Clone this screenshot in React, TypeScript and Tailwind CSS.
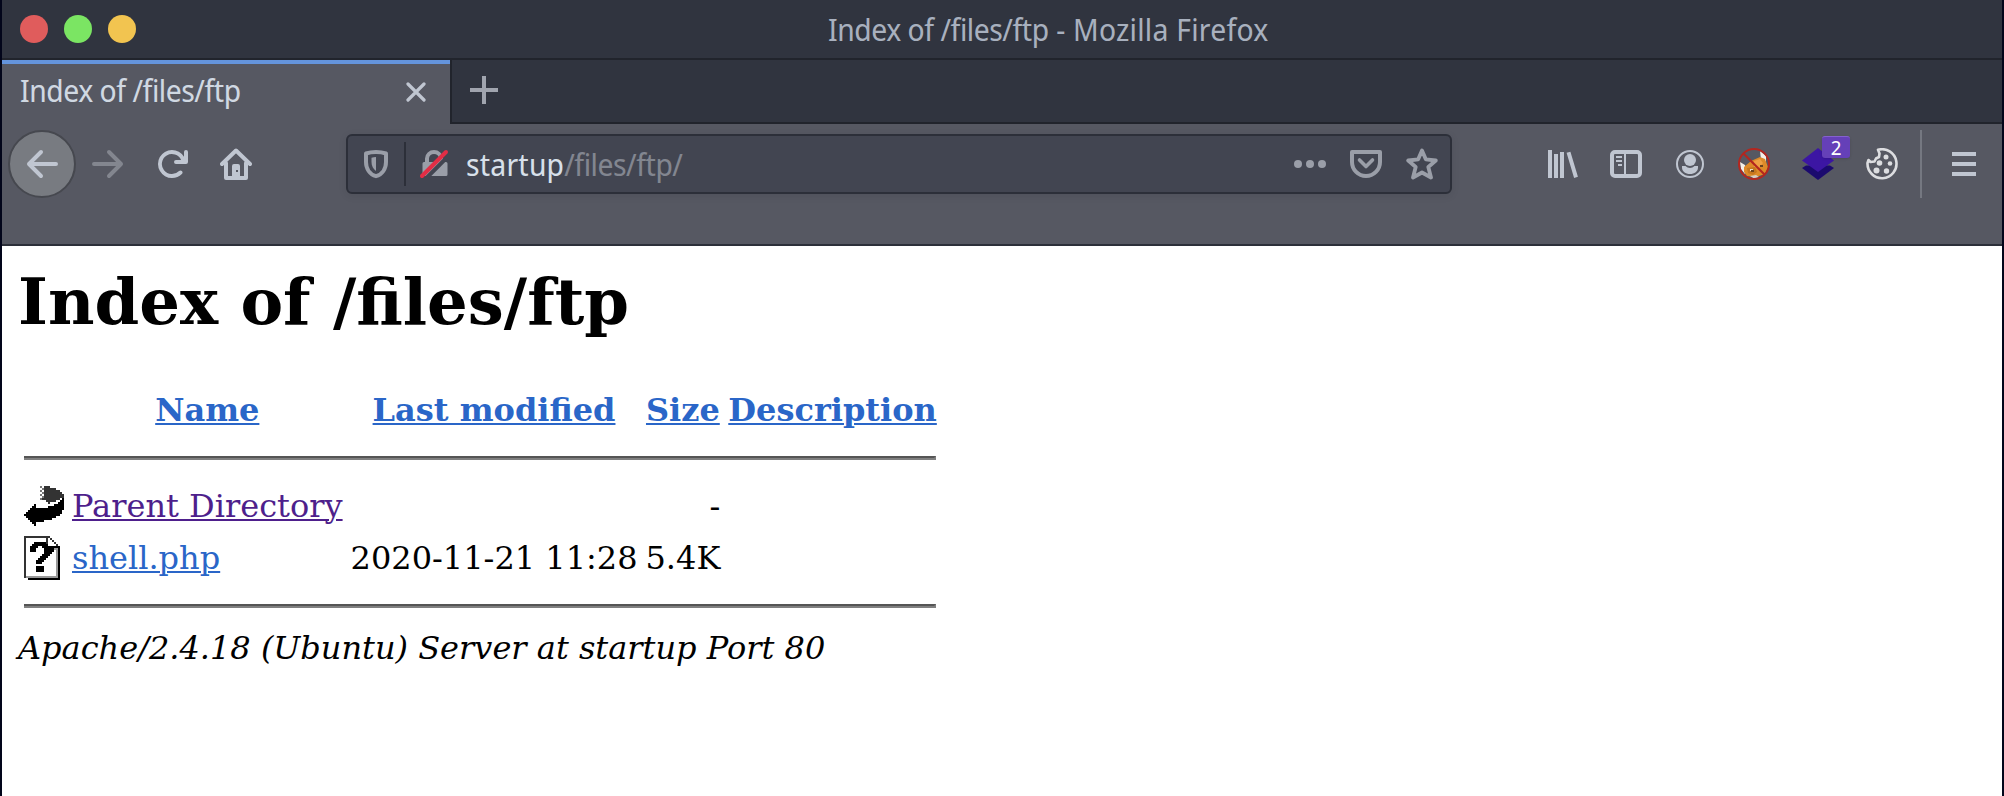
import type { ReactNode } from 'react';

type IconProps = { children: ReactNode; className?: string };

function Icon({ children, className = 'text-[#c0c6d1]' }: IconProps) {
  return (
    <svg viewBox="0 0 32 32" fill="none" stroke="currentColor" className={`size-8 shrink-0 ${className}`}>
      {children}
    </svg>
  );
}

function TitleBar() {
  return (
    <header className="flex h-[60px] items-center border-b-2 border-[#21242c] bg-[#30343f] pl-[18px]">
      <div className="flex gap-4">
        <span className="size-7 rounded-full bg-[#e05c5c]" />
        <span className="size-7 rounded-full bg-[#7be563]" />
        <span className="size-7 rounded-full bg-[#f2c450]" />
      </div>
      <h1 className="ml-[692px] pt-px text-[#a8b0be]">
        <span className="tracking-[-0.45px]">Index of /files/ftp</span>
        <span className="tracking-[0.25px]"> - Mozilla Firefox</span>
      </h1>
    </header>
  );
}

function TabStrip() {
  return (
    <div className="flex h-16 bg-[#30343f]">
      <div className="flex w-[448px] shrink-0 items-center justify-between border-t-4 border-[#6494dc] bg-[#565862] pr-6 pl-[18px] text-[#d0d8e2]">
        <span className="-mt-1.5 tracking-[-0.45px]">Index of /files/ftp</span>
        <svg viewBox="0 0 20 20" className="-mt-1 size-5" fill="none" stroke="#c0c6d1" strokeWidth="3.2" strokeLinecap="round">
          <path d="M2 2l16 16M18 2L2 18" />
        </svg>
      </div>
      <div className="flex flex-1 items-center border-b-2 border-l-2 border-[#21242c] pl-[18px]">
        <svg viewBox="0 0 28 28" className="-mt-0.5 size-7" stroke="#a0a4ae" strokeWidth="4">
          <path d="M14 0v28M0 14h28" />
        </svg>
      </div>
    </div>
  );
}

function UrlBar() {
  return (
    <div className="ml-[94px] flex h-[60px] w-[1106px] shrink-0 items-center rounded-md border-2 border-[#2c2f39] bg-[#424551] px-3 shadow-[0_2px_8px_rgba(0,0,0,0.08)]">
      <Icon className="text-[#9a9ea8]">
        <path strokeWidth="4" strokeLinejoin="round" d="M6 5.500C9 4.500 12 4 16 4s7 .5 10 1.500V14c0 7-4 12.500-10 14.200C10 26.500 6 21 6 14z" />
        <path fill="currentColor" stroke="none" d="M16 9v14c-2.800-2-4.500-5-4.500-9V9.800C13 9.300 14.500 9 16 9z" />
      </Icon>
      <span className="ml-3 h-11 w-0.5 bg-[#2c2f39]" />
      <Icon className="ml-3 text-[#9a9ea8]">
        <path strokeWidth="4" d="M9 15v-4.500a7 6.500 0 0 1 14 0V15" />
        <path fill="currentColor" stroke="none" d="M6 14h22a1.500 1.500 0 0 1 1.500 1.500v11a1.500 1.500 0 0 1-1.500 1.500H6a1.500 1.500 0 0 1-1.500-1.500v-11A1.500 1.500 0 0 1 6 14z" />
        <path stroke="#424551" strokeWidth="4" d="M5.500 33L33 5.500" />
        <path stroke="#e22d45" strokeWidth="4" strokeLinecap="round" d="M4 28L28 4" />
      </Icon>
      <div className="ml-4 flex-1 pt-0.5 text-[#828690]">
        <span className="tracking-[0.2px] text-[#d8e0ea]">startup</span>
        <span className="tracking-[-0.45px]">/files/ftp/</span>
      </div>
      <div className="flex gap-6 text-[#9a9ea8]">
        <Icon className="">
          <g fill="currentColor" stroke="none">
            <circle cx="4" cy="16" r="4" />
            <circle cx="16" cy="16" r="4" />
            <circle cx="28" cy="16" r="4" />
          </g>
        </Icon>
        <Icon className="">
          <path strokeWidth="4" strokeLinejoin="round" d="M2 4h28v10a14 14 0 0 1-28 0z" />
          <path strokeWidth="3.600" strokeLinecap="round" strokeLinejoin="round" d="M9.500 12l6.500 6.500 6.500-6.500" />
        </Icon>
        <Icon className="">
          <path strokeWidth="3.800" strokeLinejoin="round" d="M16 2.500l3.800 8.800 10 1.200-7.500 6.500 2.700 10.500L16 24.500 7 29.500l2.700-10.500-7.500-6.500 10-1.200z" />
        </Icon>
      </div>
    </div>
  );
}

function FoxBlockedIcon() {
  return (
    <Icon className="">
      <g stroke="none">
        <path fill="#f4efe8" d="M2 14l5 3 2 6-2 3-4-5zM22 3l6 5v9l-5-5z" />
        <path fill="#dd8a29" d="M6 19l7-6 9-4 5 2 3 8-3 7-9 3-9-1-3-4z" />
        <path fill="#efa044" d="M16 13l6-2 3 4-4 5-5-1z" />
        <path fill="#c5761f" d="M9 20l8-1 2 5-4 3-5-2z" />
        <path fill="#d8cfc5" d="M12 28l6-1 3 2-5 1.500z" />
        <path fill="#e8dccb" d="M12 21h3v2h-3z" />
        <path fill="#6b431f" d="M13 22h3v2h-3zM22 17h3v2h-3z" />
      </g>
      <circle cx="16" cy="16" r="15" stroke="#b3261f" strokeWidth="2" />
      <path stroke="#b3261f" strokeWidth="2.200" d="M5.500 5.500l21 21" />
    </Icon>
  );
}

function CookieIcon() {
  return (
    <Icon className="text-[#dcdde0]">
      <path strokeWidth="2.600" strokeLinejoin="round" d="M12 1.800A14.500 14.500 0 1 1 1.500 15l1-3 2 2 4-.5 1.500-3 3-1.500.5-3.500z" />
      <g fill="currentColor" stroke="none">
        <circle cx="20" cy="9" r="2.500" />
        <circle cx="13.500" cy="15" r="2.800" />
        <circle cx="24" cy="15.500" r="2.300" />
        <circle cx="10.500" cy="22.500" r="3" />
        <circle cx="20.500" cy="23" r="2.700" />
      </g>
    </Icon>
  );
}

function Toolbar() {
  return (
    <nav className="h-[122px] border-b-2 border-[#2c2f39] bg-[#565862]">
      <div className="flex h-20 items-center pl-1.5">
        <div className="flex size-[68px] shrink-0 items-center justify-center rounded-full border-2 border-[#46484f] bg-[#787b81]">
          <Icon>
            <path strokeWidth="4" strokeLinecap="round" strokeLinejoin="round" d="M30 16H3M15 4L3 16l12 12" />
          </Icon>
        </div>
        <Icon className="ml-4 text-[#83868f]">
          <path strokeWidth="4" strokeLinecap="round" strokeLinejoin="round" d="M2 16h27M17 4l12 12-12 12" />
        </Icon>
        <Icon className="ml-8 text-[#c0c6d1]">
          <path
            transform="scale(2)"
            fill="currentColor"
            stroke="none"
            d="M15 1a1 1 0 0 0-1 1v2.418A6.995 6.995 0 1 0 8 15a6.954 6.954 0 0 0 4.950-2.050 1 1 0 0 0-1.414-1.414A5.019 5.019 0 1 1 12.549 6H10a1 1 0 0 0 0 2h5a1 1 0 0 0 1-1V2a1 1 0 0 0-1-1z"
          />
        </Icon>
        <Icon className="ml-8 text-[#c0c6d1]">
          <path strokeWidth="4" strokeLinecap="round" strokeLinejoin="round" d="M2 16L16 2.500 30 16M6 15v15h20V15" />
          <path fill="currentColor" stroke="none" fillRule="evenodd" d="M12 30V18a2 2 0 0 1 2-2h4a2 2 0 0 1 2 2v12zM16 22v2h2v-2z" />
        </Icon>
        <UrlBar />
        <div className="ml-[94px] flex gap-8">
          <Icon>
            <path strokeWidth="4" d="M4 2v28M10 6v24M16 4v26M22.500 4.200L30 29.400" />
          </Icon>
          <Icon>
            <rect x="2" y="4" width="28" height="24" rx="3" strokeWidth="4" />
            <path strokeWidth="2" d="M15 4v24M6 9h6M6 13h6M8 17h4" />
          </Icon>
          <Icon>
            <circle cx="16" cy="16" r="13" strokeWidth="2" />
            <circle cx="16" cy="12" r="6" fill="currentColor" stroke="none" />
            <path fill="currentColor" stroke="none" d="M8 18h3.500c1.300 1.300 2.800 2 4.500 2s3.200-.7 4.500-2H24v1.500C24 23.500 20.500 26 16 26s-8-2.500-8-6.500z" />
          </Icon>
          <FoxBlockedIcon />
          <div className="relative">
            <Icon>
              <path fill="#1b0a6e" stroke="none" d="M0 20l4-2.500h24l4 2.500-16 12z" />
              <path fill="#3c16a3" stroke="none" d="M16 0l16 12.500L16 24 0 12.500z" />
            </Icon>
            <span className="absolute -top-3 left-5 flex h-[22px] w-7 items-center justify-center rounded-[3px] border-t border-[#8560cf] bg-[#6540b8] text-[20px] leading-none text-white shadow-sm">
              2
            </span>
          </div>
          <CookieIcon />
        </div>
        <span className="ml-[22px] h-[68px] w-0.5 bg-[#757881]" />
        <Icon className="ml-[26px] text-[#c0c6d1]">
          <path strokeWidth="4" d="M4 6h24M4 16h24M4 26h24" />
        </Icon>
      </div>
    </nav>
  );
}

function BackIcon() {
  return (
    <svg viewBox="0 0 20 22" className="h-11 w-10" shapeRendering="crispEdges">
      <path fill="#333" d="M10 1h3v1h3v1h2v1h1v1h1v2h-2v1h-2v1h-3v1h-1V9h-1V8H9V7h1z" />
      <path fill="#777" d="M8 1h1v1H8zM9 2h1v1H9zM8 3h1v1H8zM9 4h1v1H9zM8 5h1v1H8zM9 6h1v1H9zM8 7h1v1H8z" />
      <path d="M20 7v6h-1v2h-1v1h-2v1h-2v1h-4v1H6v2H5v-1H4v-1H3v-1H2v-1H1v-1H0v-1h1v-1h1v-1h1v-1h1v-1h1V10h1v2h6v-1h3v-1h2V9h1V8h1V7z" />
    </svg>
  );
}

function UnknownIcon() {
  return (
    <svg viewBox="0 0 20 22" className="h-11 w-10" shapeRendering="crispEdges">
      <path d="M2 21h15V5h1v17H2z" />
      <path fill="#999" d="M1 20h15V7h1v14H1zM14 6h3v1h-3z" />
      <path fill="#333" d="M0 0h13v1H1v20H0zM11 1h1v4h-1zM13 1h1v1h-1zM14 2h1v1h-1zM15 3h1v1h-1zM16 4h1v1h-1z" />
      <path d="M5 3h6v1h1v1h5v1h-2v2h-1v1h-1v1h-1v1h-1v1h-1v1H9v1H6v-2h1v-1h1v-1h1V9h1V6H9V5H7v1H6v2H3V5h1V4h1zM6 15h4v3H6z" />
    </svg>
  );
}

function Rule() {
  return (
    <tr>
      <td colSpan={5} className="p-0.5">
        <div className="my-4 mr-px h-1 border-t-2 border-r-2 border-b-2 border-t-[#555] border-r-[#808080] border-b-[#808080]" />
      </td>
    </tr>
  );
}

const link = 'underline decoration-2 underline-offset-2';

function DirectoryListing() {
  return (
    <main className="flex-1 bg-white px-4 pt-[18px] font-['DejaVu_Serif',serif] text-[32px] leading-[37px] text-black">
      <h1 className="mb-[41px] text-[64px] leading-[75px] font-bold">Index of /files/ftp</h1>
      <table className="border-separate border-spacing-1">
        <thead>
          <tr className="h-[50px] text-[#2a66c8]">
            <th className="p-0.5" />
            {['Name', 'Last modified', 'Size', 'Description'].map((label) => (
              <th key={label} className="px-0.5 pt-[5px] pb-0.5">
                <a className={link}>{label}</a>
              </th>
            ))}
          </tr>
        </thead>
        <tbody>
          <Rule />
          <tr className="h-12">
            <td className="p-0.5"><BackIcon /></td>
            <td className="p-0.5"><a className={`${link} text-[#4e1f8c]`}>Parent Directory</a></td>
            <td />
            <td className="p-0.5 text-right">-</td>
            <td />
          </tr>
          <tr className="h-12">
            <td className="p-0.5"><UnknownIcon /></td>
            <td className="p-0.5"><a className={`${link} text-[#2a66c8]`}>shell.php</a></td>
            <td className="p-0.5 text-right whitespace-nowrap">2020-11-21 11:28</td>
            <td className="p-0.5 text-right">5.4K</td>
            <td />
          </tr>
          <Rule />
        </tbody>
      </table>
      <address>Apache/2.4.18 (Ubuntu) Server at startup Port 80</address>
    </main>
  );
}

export default function App() {
  return (
    <div className="flex h-[796px] w-[2004px] flex-col overflow-hidden border-x-2 border-[#02051a] font-['Noto_Sans_Display','Noto_Sans',sans-serif] text-[30px] leading-10">
      <TitleBar />
      <TabStrip />
      <Toolbar />
      <DirectoryListing />
    </div>
  );
}
